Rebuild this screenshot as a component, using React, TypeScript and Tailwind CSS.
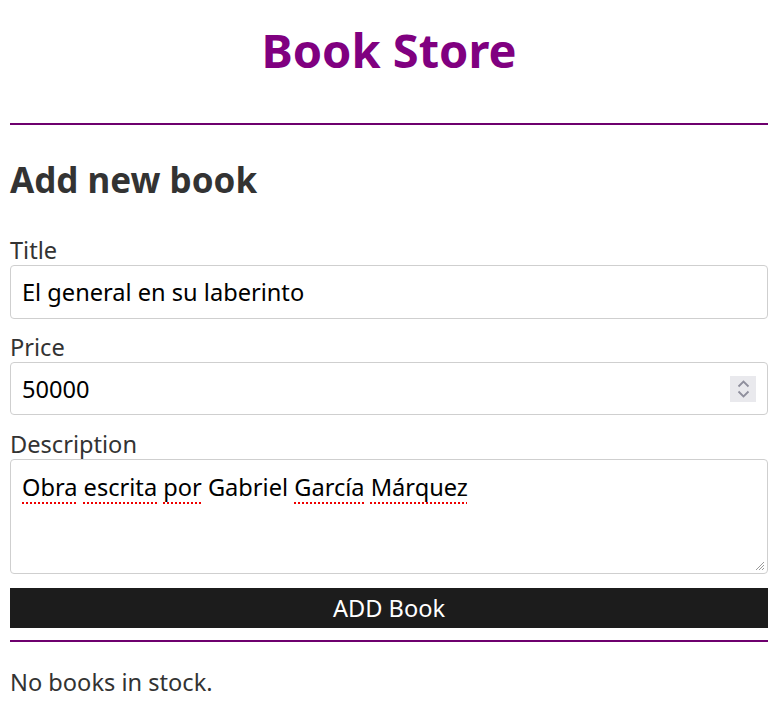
import React from "react";

const Spinner = () => (
  <div className="absolute right-[12px] top-1/2 -translate-y-1/2 w-[26px] h-[26px] bg-[#e9e9ed] flex flex-col items-center justify-center gap-[2px]">
    <svg width="13" height="8" viewBox="0 0 13 8" fill="none" stroke="#8f8f9d" strokeWidth="1.8">
      <path d="M1.5 6.5 L6.5 1.5 L11.5 6.5" />
    </svg>
    <svg width="13" height="8" viewBox="0 0 13 8" fill="none" stroke="#8f8f9d" strokeWidth="1.8">
      <path d="M1.5 1.5 L6.5 6.5 L11.5 1.5" />
    </svg>
  </div>
);

const Misspelled = ({ children }: { children: React.ReactNode }) => (
  <span className="underline decoration-dotted decoration-[#e00] decoration-[1.5px] underline-offset-[6px]">{children}</span>
);

export default function App() {
  return (
    <div className="pl-[10px] pr-[12px] font-['Noto_Sans',sans-serif] text-[23.6px] text-[#333] bg-white min-h-[706px]">
      <h1 className="pt-[20px] text-center text-[47px] leading-[60px] font-bold text-[#800080]">Book Store</h1>
      <div className="mt-[43px] h-[2px] bg-[#6e006e]" />

      <h2 className="mt-[33px] text-[35px] leading-[44px] font-bold">Add new book</h2>

      <form className="flex flex-col" onSubmit={(e) => e.preventDefault()}>
        <label className="mt-[34px] leading-[28px]">Title</label>
        <input
          className="mt-[1px] h-[54px] w-full border border-[#cfcfcf] rounded-[4px] px-[11px] text-black outline-none"
          defaultValue="El general en su laberinto"
        />

        <label className="mt-[14px] leading-[28px]">Price</label>
        <div className="relative mt-[1px]">
          <input
            className="h-[53px] w-full border border-[#cfcfcf] rounded-[4px] px-[11px] text-black outline-none"
            defaultValue="50000"
          />
          <Spinner />
        </div>

        <label className="mt-[15px] leading-[28px]">Description</label>
        <div className="relative mt-[1px] h-[115px] w-full border border-[#cfcfcf] rounded-[4px] px-[11px] pt-[12px] text-black leading-[30px]">
          <Misspelled>Obra</Misspelled> <Misspelled>escrita</Misspelled> <Misspelled>por</Misspelled> Gabriel{" "}
          <Misspelled>García</Misspelled> <Misspelled>Márquez</Misspelled>
          <svg className="absolute right-[2px] bottom-[2px]" width="10" height="10" viewBox="0 0 10 10" stroke="#9a9a9a" strokeWidth="1">
            <path d="M9 1 L1 9 M9 4 L4 9 M9 7 L7 9" />
          </svg>
        </div>

        <button
          type="submit"
          className="mt-[14px] h-[40px] w-full bg-[#1c1c1c] text-white leading-[40px]"
        >
          ADD Book
        </button>
      </form>

      <div className="mt-[12px] h-[2px] bg-[#6e006e]" />
      <p className="mt-[25px] leading-[30px]">No books in stock.</p>
    </div>
  );
}
